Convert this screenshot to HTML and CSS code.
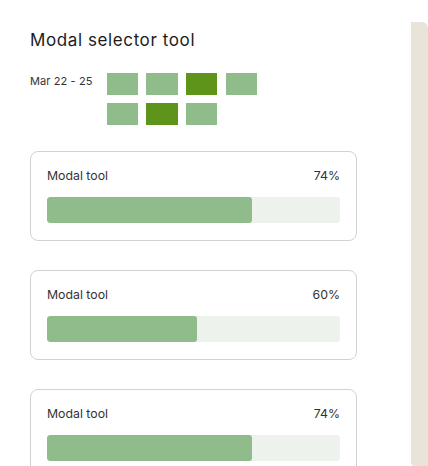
FILE: index.html
```html
<!DOCTYPE html>
<html>
<head>
<meta charset="utf-8">
<link rel="stylesheet" href="styles.css">
</head>
<body>
<div class="page">
  <main class="main">
    <h1 class="title">Modal selector tool</h1>
    <div class="dates">
      <span class="date-label">Mar 22 - 25</span>
      <div class="squares">
        <span class="sq light"></span>
        <span class="sq light"></span>
        <span class="sq dark"></span>
        <span class="sq light"></span>
        <span class="sq light"></span>
        <span class="sq dark"></span>
        <span class="sq light"></span>
      </div>
    </div>
    <div class="cards">
      <div class="card">
        <div class="card-head"><span>Modal tool</span><span>74%</span></div>
        <div class="track"><div class="fill" style="width:70%"></div></div>
      </div>
      <div class="card">
        <div class="card-head"><span>Modal tool</span><span>60%</span></div>
        <div class="track"><div class="fill" style="width:51.2%"></div></div>
      </div>
      <div class="card">
        <div class="card-head"><span>Modal tool</span><span>74%</span></div>
        <div class="track"><div class="fill" style="width:70%"></div></div>
      </div>
    </div>
  </main>
  <aside class="side"></aside>
</div>
</body>
</html>
```

FILE: styles.css
```css
html, body {
  margin: 0;
  padding: 0;
  background: #ffffff;
}
body {
  font-family: Inter, "Open Sans", sans-serif;
  color: #222;
}
.page {
  display: flex;
  height: 466px;
  overflow: hidden;
}
.main {
  width: 327px;
  flex: none;
  padding: 30px 0 0 30px;
}
.title {
  margin: 0;
  font-size: 17px;
  line-height: 20px;
  font-weight: 400;
  letter-spacing: 0.6px;
  color: #1c1c1c;
}
.dates {
  display: flex;
  margin-top: 23px;
}
.date-label {
  width: 76.5px;
  flex: none;
  font-size: 11px;
  line-height: 14px;
  letter-spacing: 0.1px;
  margin-top: 1px;
  color: #333;
}
.squares {
  display: grid;
  grid-template-columns: repeat(4, 31.5px);
  grid-auto-rows: 22px;
  column-gap: 8.2px;
  row-gap: 8px;
}
.sq.light { background: #8fbc8a; }
.sq.dark { background: #5e9419; }
.cards {
  margin-top: 26px;
  display: flex;
  flex-direction: column;
  gap: 29px;
}
.card {
  border: 1px solid #d2d2d2;
  border-radius: 8px;
  padding: 16px 16px 17px 16px;
}
.card-head {
  display: flex;
  justify-content: space-between;
  font-size: 12.3px;
  line-height: 16px;
  color: #333;
}
.track {
  margin-top: 13px;
  height: 26px;
  background: #edf2ec;
  border-radius: 3px;
  overflow: hidden;
}
.fill {
  height: 100%;
  background: #8fbc8a;
  border-radius: 3px;
}
.side {
  flex: 1;
  margin-left: 54px;
  margin-top: 22px;
  background: #e8e4da;
  border-radius: 0 6px 0 4px;
}
```
